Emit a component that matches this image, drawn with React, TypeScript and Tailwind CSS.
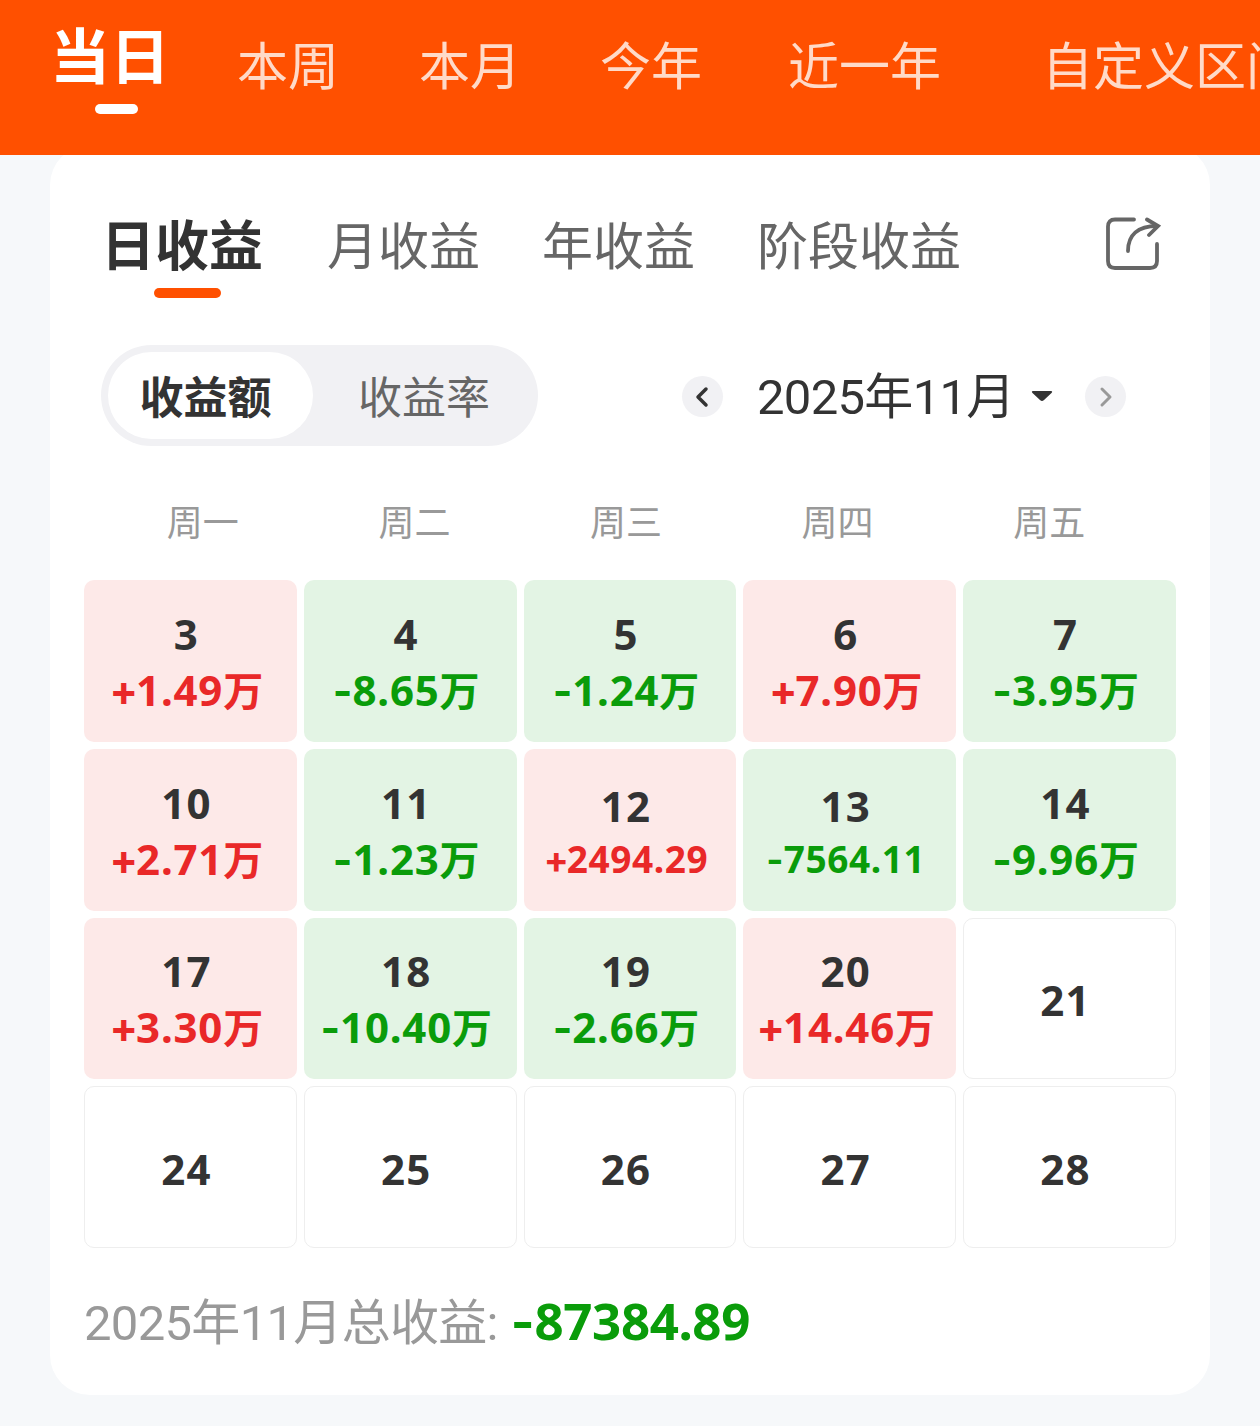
const ranges = [
  { label: "本周", cls: "ml-[65px]" },
  { label: "本月", cls: "ml-[80px]" },
  { label: "今年", cls: "ml-[79px]" },
  { label: "近一年", cls: "ml-[86px]" },
  { label: "自定义区间", cls: "ml-[101px]" },
];

const tabs = ["月收益", "年收益", "阶段收益"];

const weekdays = ["周一", "周二", "周三", "周四", "周五"];

const days = [
  { day: 3, amount: "+1.49万" },
  { day: 4, amount: "-8.65万" },
  { day: 5, amount: "-1.24万" },
  { day: 6, amount: "+7.90万" },
  { day: 7, amount: "-3.95万" },
  { day: 10, amount: "+2.71万" },
  { day: 11, amount: "-1.23万" },
  { day: 12, amount: "+2494.29" },
  { day: 13, amount: "-7564.11" },
  { day: 14, amount: "-9.96万" },
  { day: 17, amount: "+3.30万" },
  { day: 18, amount: "-10.40万" },
  { day: 19, amount: "-2.66万" },
  { day: 20, amount: "+14.46万" },
  { day: 21 },
  { day: 24 },
  { day: 25 },
  { day: 26 },
  { day: 27 },
  { day: 28 },
];

function Amount({ value }: { value: string }) {
  const unit = value.endsWith("万");
  const sign = value[0];
  return (
    <>
      <span className={`font-[Inter,sans-serif] ${sign === "+" ? "tracking-[-2px]" : "tracking-normal"}`}>{sign}</span>
      {unit ? value.slice(1, -1) : value.slice(1)}
      {unit && <span className="text-[40px] tracking-normal">万</span>}
    </>
  );
}

function DayCell({ day, amount }: { day: number; amount?: string }) {
  const tone = !amount
    ? "border border-[#eeeeee] bg-white"
    : amount.startsWith("+")
      ? "bg-[#fde9e8] text-[#e92828]"
      : "bg-[#e3f4e4] text-[#0a9c0a]";
  // amounts below 10,000 are written in full, in a smaller size
  const size = amount?.endsWith("万")
    ? "text-[42px] leading-[56px] tracking-[0.8px]"
    : "text-[37px] leading-[50px] tracking-[0.6px]";

  return (
    <div className={`flex h-full flex-col items-center justify-center rounded-[10px] pt-[3px] pr-[8px] font-bold ${tone}`}>
      <span className="text-[42px] leading-[56px] tracking-[1.2px] text-[#333333]">{day}</span>
      {amount && (
        <span className={`whitespace-nowrap ${size}`}>
          <Amount value={amount} />
        </span>
      )}
    </div>
  );
}

export default function App() {
  return (
    <div className="h-[1426px] w-[1260px] overflow-hidden bg-[#f6f8fa] font-[Roboto,'Noto_Sans_CJK_SC',sans-serif]">
      {/* Range bar */}
      <header className="relative z-10 flex h-[155px] overflow-hidden whitespace-nowrap bg-[#ff5000] pl-[52px]">
        <div className="flex w-[120px] shrink-0 flex-col items-center pt-6">
          <span className="mr-[4px] text-[60px] font-bold leading-[70px] text-white">当日</span>
          <span className="mt-[10px] ml-[9px] h-[10px] w-[43px] rounded-full bg-white" />
        </div>
        {ranges.map((r) => (
          <span key={r.label} className={`shrink-0 pt-[33px] text-[51px] leading-[70px] text-[#ffdac8] ${r.cls}`}>
            {r.label}
          </span>
        ))}
      </header>

      <main className="mx-[50px] -mt-[10px] h-[1250px] rounded-[40px] bg-white pt-[68px]">
        {/* Tabs */}
        <div className="flex h-[97px] items-start pl-[51px] pr-[49px] text-[51px] leading-[70px] text-[#666666]">
          <div className="flex flex-col items-center">
            <span className="text-[54px] font-bold text-[#333333]">日收益</span>
            <span className="mt-[5px] ml-[11px] h-[10px] w-[67px] rounded-full bg-[#ff5000]" />
          </div>
          <span className="ml-[64px]">{tabs[0]}</span>
          {tabs.slice(1).map((t) => (
            <span key={t} className="ml-[62px]">{t}</span>
          ))}
          <svg className="ml-auto h-[58px] w-[58px]" viewBox="0 0 58 58" fill="none" stroke="#666666" strokeWidth="3.800" strokeLinecap="round">
            <path d="M31 6.500H12Q5 6.500 5 13.500V48Q5 55 12 55H47Q54 55 54 48V31" />
            <path d="M25 38C25 22 35 13 54 13" />
            <path d="M44 6.500L55 13L46 22" />
          </svg>
        </div>

        {/* Mode switch and month picker */}
        <div className="mt-[35px] flex h-[101px] items-center pl-[51px]">
          <div className="flex h-[101px] w-[437px] items-center rounded-full bg-[#f1f1f4] p-[7px] text-[44px] leading-[60px]">
            <span className="flex h-[87px] w-[205px] items-center justify-center rounded-full bg-white pt-[6px] pr-[10px] font-bold text-[#333333]">
              收益额
            </span>
            <span className="flex-1 pt-[6px] pl-[45px] text-[#666666]">收益率</span>
          </div>
          <button className="mt-[2px] ml-[144px] flex h-[41px] w-[41px] items-center justify-center rounded-full bg-[#f1f1f4]">
            <svg className="h-6 w-6" viewBox="0 0 24 24" fill="none" stroke="#333333" strokeWidth="3.500" strokeLinecap="round" strokeLinejoin="round">
              <path d="M15 4L7 12L15 20" />
            </svg>
          </button>
          <span className="ml-[34px] pt-[5px] text-[49px] leading-[60px] tracking-[-0.7px] text-[#333333]">2025年11月</span>
          <svg className="ml-[16px] h-[12px] w-[22px]" viewBox="0 0 22 12" fill="#333333">
            <path d="M2 1H20Q22 1 20.500 3L13 10Q11 12 9 10L1.500 3Q0 1 2 1Z" />
          </svg>
          <button className="mt-[2px] ml-[32px] flex h-[41px] w-[41px] items-center justify-center rounded-full bg-[#f1f1f4]">
            <svg className="h-6 w-6" viewBox="0 0 24 24" fill="none" stroke="#999999" strokeWidth="3" strokeLinecap="round" strokeLinejoin="round">
              <path d="M9 4L17 12L9 20" />
            </svg>
          </button>
        </div>

        {/* Calendar */}
        <div className="mt-[53px] ml-[47px] grid w-[1058px] grid-cols-5 text-center text-[36px] leading-[50px] text-[#999999]">
          {weekdays.map((w) => (
            <span key={w}>{w}</span>
          ))}
        </div>
        <div className="mx-[34px] mt-[31px] grid h-[668px] grid-cols-5 grid-rows-4 gap-[7px] font-['Noto_Sans','Noto_Sans_CJK_SC',sans-serif]">
          {days.map((d) => (
            <DayCell key={d.day} {...d} />
          ))}
        </div>

        {/* Month total */}
        <div className="mt-[37px] flex items-baseline pl-[34px] leading-[70px]">
          <span className="text-[49px] tracking-[-0.7px] text-[#999999]">2025年11月总收益:</span>
          <span className="ml-[13px] font-['Noto_Sans',sans-serif] text-[51px] font-bold tracking-[-0.4px] text-[#0a9c0a]">
            <Amount value="-87384.89" />
          </span>
        </div>
      </main>
    </div>
  );
}
